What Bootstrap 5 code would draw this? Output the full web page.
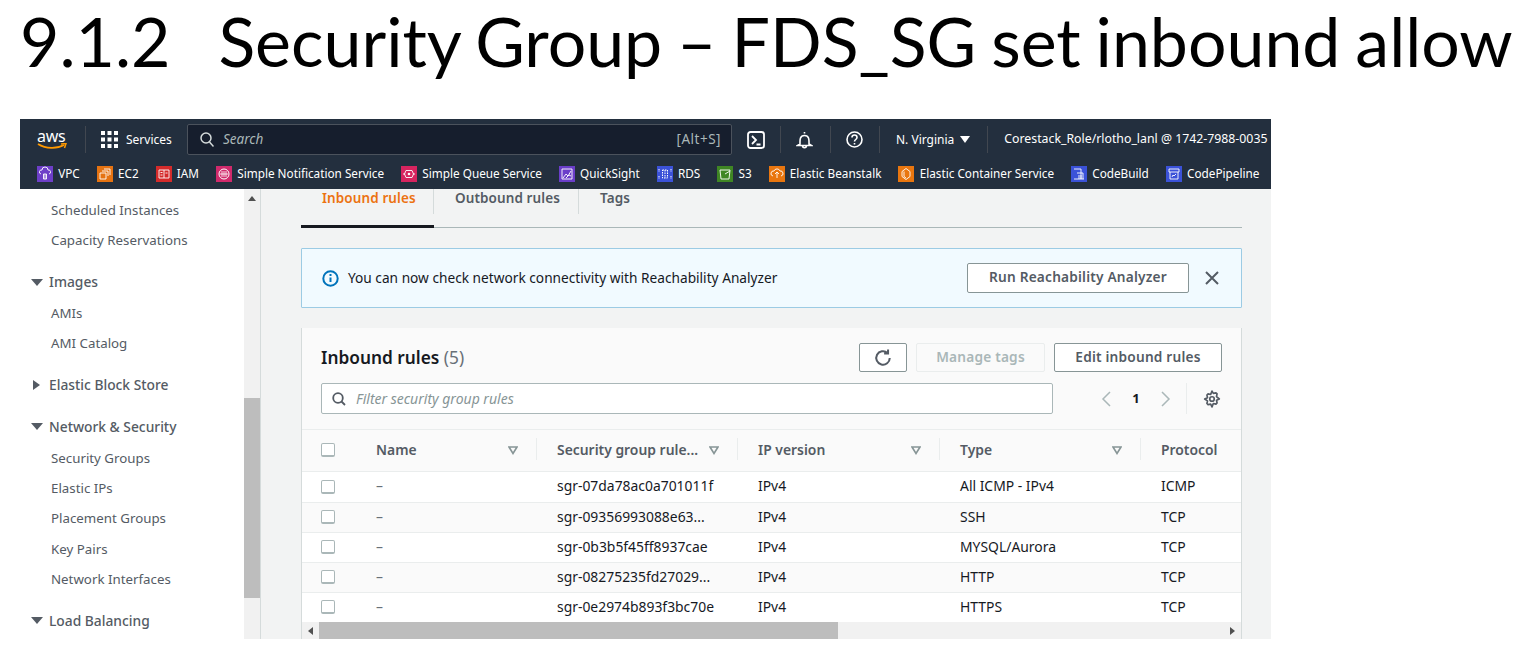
<!doctype html>
<html lang="en"><head><meta charset="utf-8"><title>Security Group</title>
<link href="https://cdn.jsdelivr.net/npm/bootstrap@5.3.0/dist/css/bootstrap.min.css" rel="stylesheet">
<style>
body{background:#fff;font-family:"Noto Sans",sans-serif;overflow:hidden;margin:0}
.slide-title{font-family:Lato,sans-serif;font-weight:400;font-size:68px;word-spacing:-2.500px;line-height:82px;height:119px;margin:0;padding-left:20px;color:#000;white-space:nowrap}
.slide-title span{margin-right:48px}
.shot{width:1251px;height:520px;margin-left:20px;overflow:hidden;background:#f2f3f3}
.top-bar{background:#232f3e;height:70px;padding:0;display:block;color:#fff}
.row-one{height:41px;color:#fff;font-size:12px;white-space:nowrap}
.logo-box{width:30px;margin-left:17px;line-height:1}
.logo-word{font-size:16px;line-height:14px;display:block;letter-spacing:-.3px}
.vr-line{width:1px;height:27px;background:#414750}
.search-box{width:545px;height:31px;background:#161e2d;border:1px solid #4b525c;border-radius:2px;color:#aab7b8;padding:0 10px 0 12px}
.search-box em{font-size:13.500px;margin-left:9px}
.search-keys{font-size:13.500px;letter-spacing:.5px}
.user-role{font-size:12.300px}
.row-two{height:29px;padding:0 0 2px 17px;color:#fff;font-size:11.750px;white-space:nowrap}
.fav{display:flex;align-items:center;gap:5.200px;margin-right:17px}
.svc{width:16px;height:16px;flex:none;display:block}
.body-wrap{height:450px}
.side-nav{width:224px;background:#fff;padding-top:6px;color:#545b64;font-size:13.300px}
.side-item{height:30.400px;line-height:30px;padding-left:31px}
.side-head{height:31.500px;line-height:30px;padding-left:11px;margin-top:10.500px;font-weight:500;font-size:13.800px;color:#545b64;display:flex;align-items:center;gap:6px}
.tri-d{width:0;height:0;border-left:6px solid transparent;border-right:6px solid transparent;border-top:7px solid #545b64}
.tri-r{width:0;height:0;border-top:5px solid transparent;border-bottom:5px solid transparent;border-left:7px solid #545b64;margin:0 3px 0 2px}
.v-scroll{width:16px;background:#f1f1f1;padding-top:7px}
.v-arrow{width:0;height:0;margin:0 auto 197px;border-left:4px solid transparent;border-right:4px solid transparent;border-bottom:5px solid #505050}
.v-thumb{height:200px;background:#bdbdbd}
.main-pane{width:1011px;border-left:1px solid #d5dbdb;padding:0 29px 0 40px}
.tab-strip{height:39px;border-bottom:1px solid #aab7b8;font-size:13.500px;font-weight:600;letter-spacing:.1px;color:#545b64;white-space:nowrap}
.tab-cell{height:25px;line-height:18px;border-right:1px solid #d5dbdb;padding:0 21px}
.tab-first{width:133px;height:39px;color:#ec7211;border-bottom:3px solid #16191f;padding:0 0 0 21px;line-height:18px;position:relative}
.tab-first:after{content:"";position:absolute;right:0;top:0;height:25px;border-right:1px solid #d5dbdb}
.tab-two{width:145px}
.tab-three{border:0}
.reach{height:60px;margin:20px 0;padding:0 22px 0 20px;background:#f1faff;border:1px solid #9ccbe4;border-radius:1px;color:#16191f;font-size:13.700px}
.reach-text{margin-left:9px}
.aws-btn{background:#fff;border:1px solid #879596;border-radius:2px;color:#545b64;font-weight:600;font-size:13.700px;line-height:1;padding:0 0 2px;height:30px;letter-spacing:.2px}
.aws-btn:disabled{background:#fafafa;border-color:#eaeded;color:#aab7b8;opacity:1}
.run-btn{width:222px;margin-left:auto;margin-right:16px;height:30px}
.rule-card{height:311px;background:#fff;border:0;border-radius:0;border-left:1px solid #d5dbdb;border-right:1px solid #d5dbdb}
.rule-head{height:102px;padding:15px 19px 0 19px;background:#fafafa;border-bottom:1px solid #eaeded}
.rule-title{font-size:17.300px;font-weight:600;color:#16191f;line-height:29px;margin:0}
.rule-title small{font-weight:400;color:#687078;font-size:17.300px}
.btn-ref{width:48px;height:29px;padding:0}.btn-tags{width:129px;height:29px;margin-left:9px}.btn-edit{width:168px;height:29px;margin-left:9px}
.filter-row{margin-top:11px;height:31px}
.filter-box{width:732px;height:31px;background:#fff;border:1px solid #aab7b8;border-radius:2px;padding:0 10px;color:#879596;font-size:14px}
.filter-box em{margin-left:10px}
.pager{margin-left:auto;color:#16191f;font-size:13px;font-weight:700;padding-right:1px}
.pager-cell{width:32px;text-align:center}
.pager-rule{width:1px;height:31px;background:#eaeded;margin:0 16px 0 14px}
.rule-table{table-layout:fixed;width:939px;margin:0;font-size:13.900px;color:#16191f}
.rule-table th{height:41px;background:#fafafa;color:#545b64;font-weight:600;padding:0 0 0 20px;vertical-align:middle;border-bottom:1px solid #eaeded;white-space:nowrap}
.rule-table td{height:30px;padding:0 0 0 20px;vertical-align:middle;border-bottom:1px solid #eaeded;background:#fff;color:#16191f;white-space:nowrap}
.rule-table tbody tr:first-child td{height:31px}
.rule-table tr.alt td{background:#fafafa}
.rule-table tr:last-child td{border-bottom:0}
.rule-table .nm{color:#687078}
.chk{appearance:none;width:14px;height:14px;margin:0 0 0 -1px;display:block;background:#fff;border:1px solid #aab7b8;border-bottom-width:2px;border-radius:2px}
.th-in{display:flex;align-items:center;justify-content:space-between;padding-right:19px;position:relative}
.th-in:after{content:"";position:absolute;right:0;top:-2px;height:22px;border-right:1px solid #eaeded}
.h-scroll{height:17px;background:#f1f1f1;padding-left:6px}
.h-left{width:0;height:0;border-top:4px solid transparent;border-bottom:4px solid transparent;border-right:5px solid #505050;margin-right:6px}
.h-thumb{width:519px;height:17px;background:#bdbdbd}
.h-right{width:0;height:0;border-top:4px solid transparent;border-bottom:4px solid transparent;border-left:5px solid #505050;margin-left:auto;margin-right:6px}
</style></head>
<body>
<h1 class="slide-title"><span>9.1.2</span>Security Group – FDS_SG set inbound allow</h1>
<div class="shot">
  <nav class="navbar top-bar">
    <div class="row-one d-flex align-items-center w-100">
      <div class="logo-box"><span class="logo-word">aws</span>
        <svg width="30" height="8" viewBox="0 0 30 8" class="d-block"><path d="M1 1c8 5 19 5 26 1" fill="none" stroke="#f90" stroke-width="1.8"/><path d="M24 1l5-.5-1.500 4.500" fill="none" stroke="#f90" stroke-width="1.500"/></svg>
      </div>
      <div class="vr-line" style="margin-left:18px"></div>
      <svg width="17" height="17" viewBox="0 0 17 17" style="margin-left:15px" fill="#fff"><rect x="0" y="0" width="4" height="4"/><rect x="6.500" y="0" width="4" height="4"/><rect x="13" y="0" width="4" height="4"/><rect x="0" y="6.500" width="4" height="4"/><rect x="6.500" y="6.500" width="4" height="4"/><rect x="13" y="6.500" width="4" height="4"/><rect x="0" y="13" width="4" height="4"/><rect x="6.500" y="13" width="4" height="4"/><rect x="13" y="13" width="4" height="4"/></svg>
      <span style="margin-left:8px;width:61px">Services</span>
      <div class="search-box d-flex align-items-center">
        <svg width="14" height="15" viewBox="0 0 14 15" fill="none" stroke="#d5dbdb" stroke-width="1.500"><circle cx="6" cy="6" r="5"/><path d="M9.500 10l4 4.500"/></svg>
        <em>Search</em><span class="ms-auto search-keys">[Alt+S]</span>
      </div>
      <svg width="18" height="18" viewBox="0 0 18 18" style="margin-left:15px" fill="none" stroke="#fff" stroke-width="1.800"><rect x="1" y="1" width="16" height="16" rx="2.500"/><path d="M5 5l4 4-4 4M9.500 13.500h4"/></svg>
      <div class="vr-line" style="margin-left:15px"></div>
      <svg width="17" height="18" viewBox="0 0 17 18" style="margin-left:15px" fill="none" stroke="#fff" stroke-width="1.600"><path d="M8.500 1v1.500M4 13c0-3-.2-4 .5-6 .6-1.700 2-2.500 4-2.500s3.400.8 4 2.500c.7 2 .5 3 .5 6l2.500 1.500h-14zM6.500 14.500c0 3 4 3 4 0"/></svg>
      <div class="vr-line" style="margin-left:17px"></div>
      <svg width="17" height="17" viewBox="0 0 17 17" style="margin-left:15px" fill="none" stroke="#fff" stroke-width="1.600"><circle cx="8.500" cy="8.500" r="7.500"/><path d="M6 6.500c0-3.300 5-3.300 5 0 0 2-2.500 2-2.500 4M8.500 12v1.500"/></svg>
      <div class="vr-line" style="margin-left:16px"></div>
      <span style="margin-left:16px">N. Virginia</span>
      <span class="tri-d" style="margin-left:6px;border-top-color:#fff;border-left-width:5px;border-right-width:5px"></span>
      <div class="vr-line" style="margin-left:17px"></div>
      <span class="user-role" style="margin-left:16px">Corestack_Role/rlotho_lanl @ 1742-7988-0035</span>
    </div>
    <div class="row-two d-flex align-items-center w-100">
      <div class="fav"><svg class="svc" viewBox="0 0 16 16"><rect width="16" height="16" fill="#6d3fc8"/><path d="M4 8a2 2 0 0 1 1-4 3 3 0 0 1 6 0 2 2 0 0 1 1 4M6.500 8h3v5h-3zM8 8v5" fill="none" stroke="#fff" stroke-width=".9"/></svg>VPC</div>
      <div class="fav"><svg class="svc" viewBox="0 0 16 16"><rect width="16" height="16" fill="#e57312"/><path d="M3 7h6v6H3zM5 5h6v5M7 3h6v6" fill="none" stroke="#fff" stroke-width=".9"/></svg>EC2</div>
      <div class="fav"><svg class="svc" viewBox="0 0 16 16"><rect width="16" height="16" fill="#d42b2b"/><path d="M3 4h10v8H3zM8 4v8M4.500 6.500h2M4.500 9h2M9.500 7h2" fill="none" stroke="#fff" stroke-width=".9"/></svg>IAM</div>
      <div class="fav"><svg class="svc" viewBox="0 0 16 16"><rect width="16" height="16" fill="#d02a6c"/><circle cx="8" cy="8" r="5" fill="none" stroke="#fff"/><path d="M6 5v6M8 5v6M10 5v6M4 8h8" fill="none" stroke="#fff" stroke-width=".8"/></svg>Simple Notification Service</div>
      <div class="fav"><svg class="svc" viewBox="0 0 16 16"><rect width="16" height="16" fill="#d7245f"/><path d="M2 8h2M12 8h2M5 4.500h6l1.500 3.500-1.500 3.500H5L3.500 8z" fill="none" stroke="#fff" stroke-width=".9"/><circle cx="8" cy="8" r="1.300" fill="#fff"/></svg>Simple Queue Service</div>
      <div class="fav"><svg class="svc" viewBox="0 0 16 16"><rect width="16" height="16" fill="#6a3ec9"/><path d="M3 3h10v10H3zM4 12l3-4 2 2 3-5M7 12l3-3 2 1" fill="none" stroke="#fff" stroke-width=".9"/></svg>QuickSight</div>
      <div class="fav"><svg class="svc" viewBox="0 0 16 16"><rect width="16" height="16" fill="#3b52d8"/><path d="M2 3v3M2 10v3M14 3v3M14 10v3M5.500 4h5v8h-5zM8 4v8" fill="none" stroke="#fff" stroke-width="1" stroke-dasharray="1.500 1"/></svg>RDS</div>
      <div class="fav"><svg class="svc" viewBox="0 0 16 16"><rect width="16" height="16" fill="#3f8624"/><path d="M3 4h10l-1 9H4zM8 8l5-3" fill="none" stroke="#fff" stroke-width=".9"/></svg>S3</div>
      <div class="fav"><svg class="svc" viewBox="0 0 16 16"><rect width="16" height="16" fill="#e9760f"/><path d="M4 10a2.500 2.500 0 0 1 1-5 3.200 3.200 0 0 1 6 0 2.500 2.500 0 0 1 1 5M6 8l2-2 2 2M8 6v6" fill="none" stroke="#fff" stroke-width=".9"/></svg>Elastic Beanstalk</div>
      <div class="fav"><svg class="svc" viewBox="0 0 16 16"><rect width="16" height="16" fill="#e9760f"/><path d="M8 2.500l4 3v5l-4 3-4-3v-5zM6 5.500v5l2 1.500" fill="none" stroke="#fff" stroke-width=".9"/></svg>Elastic Container Service</div>
      <div class="fav"><svg class="svc" viewBox="0 0 16 16"><rect width="16" height="16" fill="#3b52d8"/><path d="M3 13h10M3 3h7v10M6 7h6v6M8 9v4M10 9v4" fill="none" stroke="#fff" stroke-width=".9"/></svg>CodeBuild</div>
      <div class="fav"><svg class="svc" viewBox="0 0 16 16"><rect width="16" height="16" fill="#3b52d8"/><path d="M3 3h10v3H3zM4 6v7h8V6M6 11l1-2 1 1 2-2" fill="none" stroke="#fff" stroke-width=".9"/></svg>CodePipeline</div>
    </div>
  </nav>
  <div class="body-wrap d-flex">
    <aside class="side-nav">
      <div class="side-item">Scheduled Instances</div>
      <div class="side-item">Capacity Reservations</div>
      <div class="side-head"><i class="tri-d"></i>Images</div>
      <div class="side-item">AMIs</div>
      <div class="side-item">AMI Catalog</div>
      <div class="side-head"><i class="tri-r"></i>Elastic Block Store</div>
      <div class="side-head"><i class="tri-d"></i>Network &amp; Security</div>
      <div class="side-item">Security Groups</div>
      <div class="side-item">Elastic IPs</div>
      <div class="side-item">Placement Groups</div>
      <div class="side-item">Key Pairs</div>
      <div class="side-item">Network Interfaces</div>
      <div class="side-head"><i class="tri-d"></i>Load Balancing</div>
    </aside>
    <div class="v-scroll"><div class="v-arrow"></div><div class="v-thumb"></div></div>
    <main class="main-pane">
      <div class="tab-strip d-flex">
        <div class="tab-first">Inbound rules</div>
        <div class="tab-cell tab-two">Outbound rules</div>
        <div class="tab-cell tab-three">Tags</div>
      </div>
      <div class="alert reach d-flex align-items-center">
        <svg width="17" height="17" viewBox="0 0 17 17" fill="none" stroke="#0073bb" stroke-width="2"><circle cx="8.500" cy="8.500" r="7.200"/><path d="M8.500 7.500v4.500M8.500 4v2"/></svg>
        <span class="reach-text">You can now check network connectivity with Reachability Analyzer</span>
        <button type="button" class="btn aws-btn run-btn">Run Reachability Analyzer</button>
        <svg width="14" height="14" viewBox="0 0 14 14" fill="none" stroke="#545b64" stroke-width="2"><path d="M1 1l12 12M13 1L1 13"/></svg>
      </div>
      <section class="card rule-card">
        <div class="rule-head">
          <div class="d-flex align-items-center">
            <h2 class="rule-title me-auto">Inbound rules <small>(5)</small></h2>
            <button type="button" class="btn aws-btn btn-ref"><svg width="18" height="18" viewBox="1 1 16 16" fill="none" stroke="#545b64" stroke-width="1.800"><path d="M15 9a6 6 0 1 1-2-4.500M13.500 1.500v3.500H10"/></svg></button>
            <button type="button" class="btn aws-btn btn-tags" disabled>Manage tags</button>
            <button type="button" class="btn aws-btn btn-edit">Edit inbound rules</button>
          </div>
          <div class="filter-row d-flex align-items-center">
            <div class="filter-box d-flex align-items-center">
              <svg width="14" height="14" viewBox="0 0 14 14" fill="none" stroke="#545b64" stroke-width="1.800"><circle cx="6" cy="6" r="4.800"/><path d="M9.500 9.500L13 13"/></svg>
              <em>Filter security group rules</em>
            </div>
            <div class="pager d-flex align-items-center">
              <svg width="12" height="16" viewBox="0 0 12 16" fill="none" stroke="#aab7b8" stroke-width="1.500"><path d="M10 1L3 8l7 7"/></svg>
              <span class="pager-cell mx-2">1</span>
              <svg width="12" height="16" viewBox="0 0 12 16" fill="none" stroke="#aab7b8" stroke-width="1.500"><path d="M2 1l7 7-7 7"/></svg>
              <div class="pager-rule"></div>
              <svg width="18" height="18" viewBox="0 0 16 16" fill="none" stroke="#545b64" stroke-width="1.500"><path d="M8 1l1.200 2 2.300-.5 1 1 -.5 2.300L14.500 8l-2.500 1.200.5 2.300-1 1-2.300-.5L8 15l-1.200-2.500-2.300.5-1-1 .5-2.300L1.500 8l2.500-1.200-.5-2.300 1-1 2.300.5z" stroke-linejoin="round"/><circle cx="8" cy="8" r="2"/></svg>
            </div>
          </div>
        </div>
        <table class="table rule-table">
          <colgroup><col style="width:54px"><col style="width:181px"><col style="width:201px"><col style="width:202px"><col style="width:201px"><col style="width:100px"></colgroup>
          <thead><tr>
            <th><input class="chk" type="checkbox" aria-label="Select all"></th>
            <th><div class="th-in">Name<svg width="10" height="9" viewBox="0 0 10 9" fill="none" stroke="#879596" stroke-width="1.600"><path d="M1 1h8L5 7.500z"/></svg></div></th>
            <th><div class="th-in">Security group rule...<svg width="10" height="9" viewBox="0 0 10 9" fill="none" stroke="#879596" stroke-width="1.600"><path d="M1 1h8L5 7.500z"/></svg></div></th>
            <th><div class="th-in">IP version<svg width="10" height="9" viewBox="0 0 10 9" fill="none" stroke="#879596" stroke-width="1.600"><path d="M1 1h8L5 7.500z"/></svg></div></th>
            <th><div class="th-in">Type<svg width="10" height="9" viewBox="0 0 10 9" fill="none" stroke="#879596" stroke-width="1.600"><path d="M1 1h8L5 7.500z"/></svg></div></th>
            <th>Protocol</th>
          </tr></thead>
          <tbody>
            <tr><td><input class="chk" type="checkbox" aria-label="Select"></td><td class="nm">–</td><td>sgr-07da78ac0a701011f</td><td>IPv4</td><td>All ICMP - IPv4</td><td>ICMP</td></tr>
            <tr class="alt"><td><input class="chk" type="checkbox" aria-label="Select"></td><td class="nm">–</td><td>sgr-09356993088e63...</td><td>IPv4</td><td>SSH</td><td>TCP</td></tr>
            <tr><td><input class="chk" type="checkbox" aria-label="Select"></td><td class="nm">–</td><td>sgr-0b3b5f45ff8937cae</td><td>IPv4</td><td>MYSQL/Aurora</td><td>TCP</td></tr>
            <tr class="alt"><td><input class="chk" type="checkbox" aria-label="Select"></td><td class="nm">–</td><td>sgr-08275235fd27029...</td><td>IPv4</td><td>HTTP</td><td>TCP</td></tr>
            <tr><td><input class="chk" type="checkbox" aria-label="Select"></td><td class="nm">–</td><td>sgr-0e2974b893f3bc70e</td><td>IPv4</td><td>HTTPS</td><td>TCP</td></tr>
          </tbody>
        </table>
        <div class="h-scroll d-flex align-items-center"><i class="h-left"></i><div class="h-thumb"></div><i class="h-right"></i></div>
      </section>
    </main>
  </div>
</div>
<script src="https://cdn.jsdelivr.net/npm/bootstrap@5.3.0/dist/js/bootstrap.bundle.min.js"></script>
</body></html>
